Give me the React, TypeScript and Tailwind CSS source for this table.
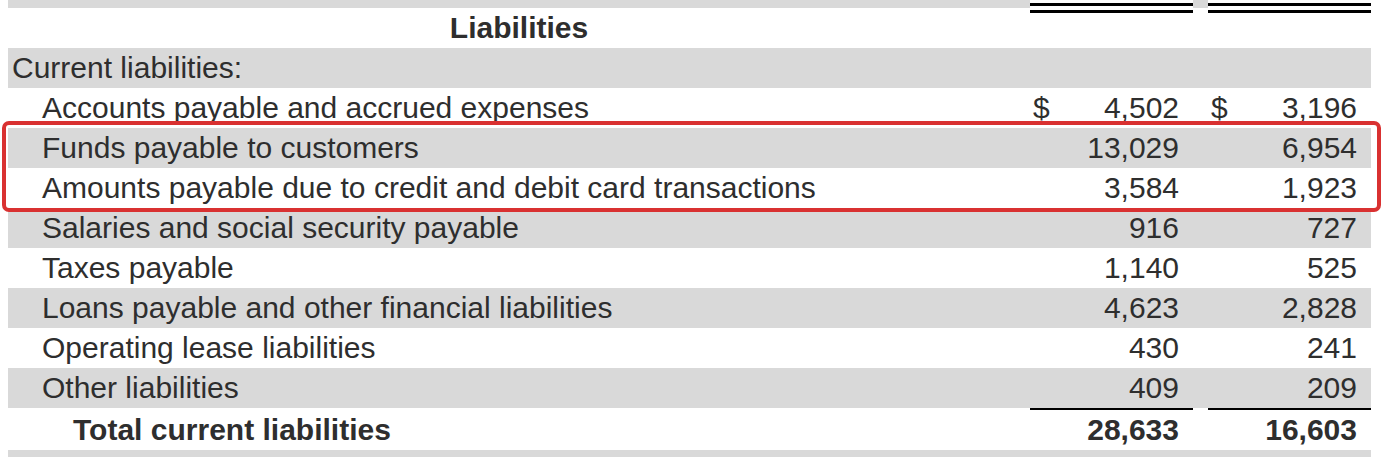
import React from "react";

type Row = {
  label: string;
  a: string;
  b: string;
  dollar?: boolean;
  gray: boolean;
  indent: "none" | "one";
};

const rows: Row[] = [
  { label: "Current liabilities:", a: "", b: "", gray: true, indent: "none" },
  { label: "Accounts payable and accrued expenses", a: "4,502", b: "3,196", dollar: true, gray: false, indent: "one" },
  { label: "Funds payable to customers", a: "13,029", b: "6,954", gray: true, indent: "one" },
  { label: "Amounts payable due to credit and debit card transactions", a: "3,584", b: "1,923", gray: false, indent: "one" },
  { label: "Salaries and social security payable", a: "916", b: "727", gray: true, indent: "one" },
  { label: "Taxes payable", a: "1,140", b: "525", gray: false, indent: "one" },
  { label: "Loans payable and other financial liabilities", a: "4,623", b: "2,828", gray: true, indent: "one" },
  { label: "Operating lease liabilities", a: "430", b: "241", gray: false, indent: "one" },
  { label: "Other liabilities", a: "409", b: "209", gray: true, indent: "one" },
];

function NumCell({ value, dollar }: { value: string; dollar?: boolean }) {
  return (
    <div className="w-[163px] flex items-center justify-between pl-[3px] pr-[14px]">
      <span>{dollar ? "$" : ""}</span>
      <span>{value}</span>
    </div>
  );
}

export default function App() {
  return (
    <div
      className="relative w-[1384px] h-[457px] bg-white overflow-hidden text-[#2e2e2e] text-[30px] leading-[40px]"
      style={{ fontFamily: '"Liberation Sans", Arial, sans-serif' }}
    >
      <div className="ml-[8px] w-[1363px] flex flex-col">
        {/* top strip + header */}
        <div className="flex h-[48px]">
          <div className="w-[1022px] flex flex-col">
            <div className="h-[8px] bg-[#d9d9d9]" />
            <div className="h-[40px] text-center font-bold">Liabilities</div>
          </div>
          <div className="w-[163px]">
            <div className="mt-[3px] border-t-[10px] border-double border-black" />
          </div>
          <div className="w-[15px] h-[8px] bg-[#d9d9d9]" />
          <div className="w-[163px]">
            <div className="mt-[3px] border-t-[10px] border-double border-black" />
          </div>
        </div>

        {rows.map((r, i) => (
          <div
            key={i}
            className={`flex h-[40px] ${r.gray ? "bg-[#d9d9d9]" : "bg-white"}`}
          >
            <div
              className={`w-[1022px] whitespace-nowrap ${r.indent === "none" ? "pl-[4px]" : "pl-[34px]"}`}
            >
              {r.label}
            </div>
            <NumCell value={r.a} dollar={r.dollar} />
            <div className="w-[15px]" />
            <NumCell value={r.b} dollar={r.dollar} />
          </div>
        ))}

        {/* total */}
        <div className="flex h-[42px] font-bold">
          <div className="w-[1022px] pl-[65px] pt-[2px]">Total current liabilities</div>
          <div className="w-[163px] border-t-2 border-black flex justify-end pr-[14px]">
            28,633
          </div>
          <div className="w-[15px]" />
          <div className="w-[163px] border-t-2 border-black flex justify-end pr-[14px]">
            16,603
          </div>
        </div>
        <div className="h-[7px] bg-[#d9d9d9]" />
      </div>

      {/* red highlight box overlay */}
      <div className="absolute left-[2px] top-[121px] w-[1379px] h-[91px] border-4 border-[#d93131] rounded-[7px] pointer-events-none" />
    </div>
  );
}
